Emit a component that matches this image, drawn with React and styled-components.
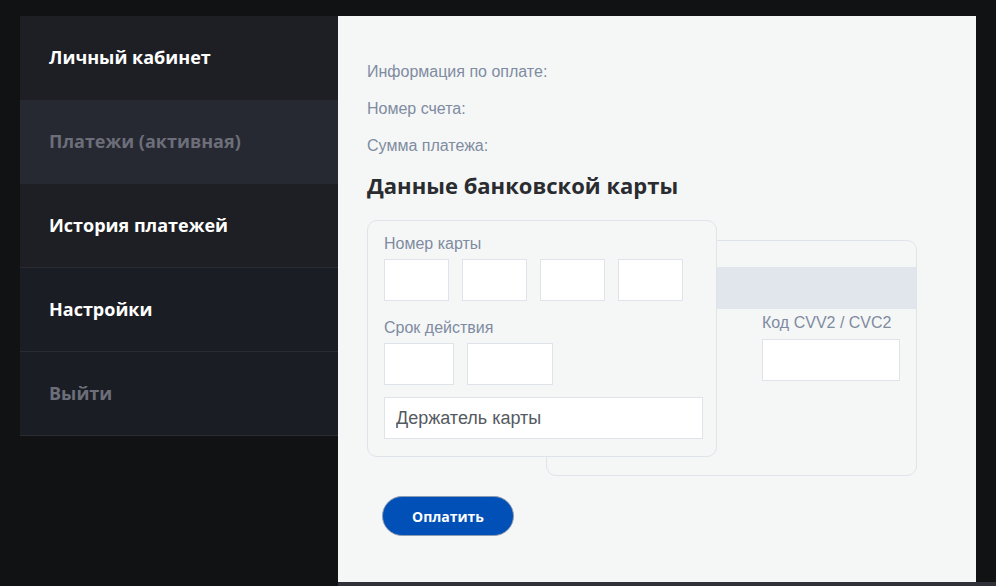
import React from "react";
import styled, { createGlobalStyle } from "styled-components";

const GlobalStyle = createGlobalStyle`
    html, body {
        margin: 0;
        padding: 0;
        background: #111214;
        height: 100%;
        overflow: hidden;
    }
    * {
        box-sizing: border-box;
    }
`;

const Page = styled.div`
    display: flex;
    align-items: flex-start;
    padding-top: 16px;
    width: 996px;
    height: 586px;
`;

const Sidebar = styled.nav`
    width: 318px;
    margin-left: 20px;
    display: flex;
    flex-direction: column;
    font-family: "Open Sans", "DejaVu Sans", sans-serif;
`;

const NavItem = styled.a`
    display: flex;
    align-items: center;
    height: 84px;
    padding: 0 0 2px 29px;
    font-size: 18px;
    font-weight: 700;
    text-decoration: none;
    color: ${(p) => (p.$muted ? "#6c6f79" : "#ffffff")};
    background: ${(p) => p.$bg};
    border-bottom: ${(p) => (p.$bordered ? "1px solid #2a2c34" : "none")};
`;

const RightColumn = styled.div`
    flex: 1;
    display: flex;
    flex-direction: column;
`;

const Main = styled.main`
    width: 638px;
    height: 566px;
    background: #f5f7f7;
    padding: 46px 29px 0;
`;

const BottomStrip = styled.div`
    height: 4px;
    background: #2f3038;
`;

const InfoLine = styled.p`
    margin: 0 0 17px;
    font-family: "Liberation Sans", Arial, sans-serif;
    font-size: 16px;
    line-height: 20px;
    color: #7f8ba0;
`;

const Heading = styled.h2`
    margin: -2px 0 21px;
    font-family: "Open Sans", "DejaVu Sans", sans-serif;
    font-size: 22px;
    line-height: 28px;
    font-weight: 700;
    color: #2a2c30;
`;

const CardsArea = styled.div`
    position: relative;
    width: 550px;
    height: 256px;
`;

const CardFront = styled.div`
    position: absolute;
    left: 0;
    top: 0;
    z-index: 2;
    width: 350px;
    height: 237px;
    border: 1px solid #dfe3ea;
    border-radius: 10px;
    background: #f5f7f7;
    padding: 13px 16px 0;
`;

const CardBack = styled.div`
    position: absolute;
    left: 179px;
    top: 20px;
    z-index: 1;
    width: 371px;
    height: 236px;
    border: 1px solid #dfe3ea;
    border-radius: 10px;
    background: #f5f7f7;
    padding-top: 26px;
    display: flex;
    flex-direction: column;
    align-items: flex-end;
`;

const Stripe = styled.div`
    width: 100%;
    height: 42px;
    background: #e1e5ec;
`;

const CvvBlock = styled.div`
    width: 154px;
    padding-top: 4px;
`;

const Label = styled.div`
    font-family: "Liberation Sans", Arial, sans-serif;
    font-size: 16px;
    line-height: 19px;
    color: #7f8ba0;
    margin-bottom: ${(p) => p.$gap || "6px"};
`;

const FieldRow = styled.div`
    display: flex;
    gap: 13px;
    margin-bottom: ${(p) => p.$mb || "0"};
`;

const Field = styled.input`
    width: ${(p) => p.$w};
    height: 42px;
    border: 1px solid #dfe3ea;
    background: #ffffff;
    padding: 0 11px;
    font-family: "Liberation Sans", Arial, sans-serif;
    font-size: 18px;
    color: #555a61;
    outline: none;
    &::placeholder {
        color: #555a61;
    }
`;

const PayButton = styled.button`
    margin: 20px 0 0 15px;
    width: 132px;
    height: 40px;
    border-radius: 20px;
    border: 1px solid #8f9bb0;
    background: #0050b7;
    color: #ffffff;
    font-family: "Open Sans", "DejaVu Sans", sans-serif;
    font-size: 14px;
    font-weight: 700;
    cursor: pointer;
`;

const App = () => (
    <Page>
        <GlobalStyle />
        <Sidebar>
            <NavItem $bg="#1e1f24">Личный кабинет</NavItem>
            <NavItem $bg="#262832" $muted>Платежи (активная)</NavItem>
            <NavItem $bg="#1e1f24" $bordered>История платежей</NavItem>
            <NavItem $bg="#1b1d24" $bordered>Настройки</NavItem>
            <NavItem $bg="#1b1d24" $bordered $muted>Выйти</NavItem>
        </Sidebar>
        <RightColumn>
            <Main>
                <InfoLine>Информация по оплате:</InfoLine>
                <InfoLine>Номер счета:</InfoLine>
                <InfoLine>Сумма платежа:</InfoLine>
                <Heading>Данные банковской карты</Heading>
                <CardsArea>
                    <CardFront>
                        <Label>Номер карты</Label>
                        <FieldRow $mb="17px">
                            <Field $w="65px" />
                            <Field $w="65px" />
                            <Field $w="65px" />
                            <Field $w="65px" />
                        </FieldRow>
                        <Label>Срок действия</Label>
                        <FieldRow $mb="12px">
                            <Field $w="70px" />
                            <Field $w="86px" />
                        </FieldRow>
                        <Field $w="319px" placeholder="Держатель карты" />
                    </CardFront>
                    <CardBack>
                        <Stripe />
                        <CvvBlock>
                            <Label $gap="7px">Код CVV2 / CVC2</Label>
                            <Field $w="138px" />
                        </CvvBlock>
                    </CardBack>
                </CardsArea>
                <PayButton>Оплатить</PayButton>
            </Main>
            <BottomStrip />
        </RightColumn>
    </Page>
);

export default App;
